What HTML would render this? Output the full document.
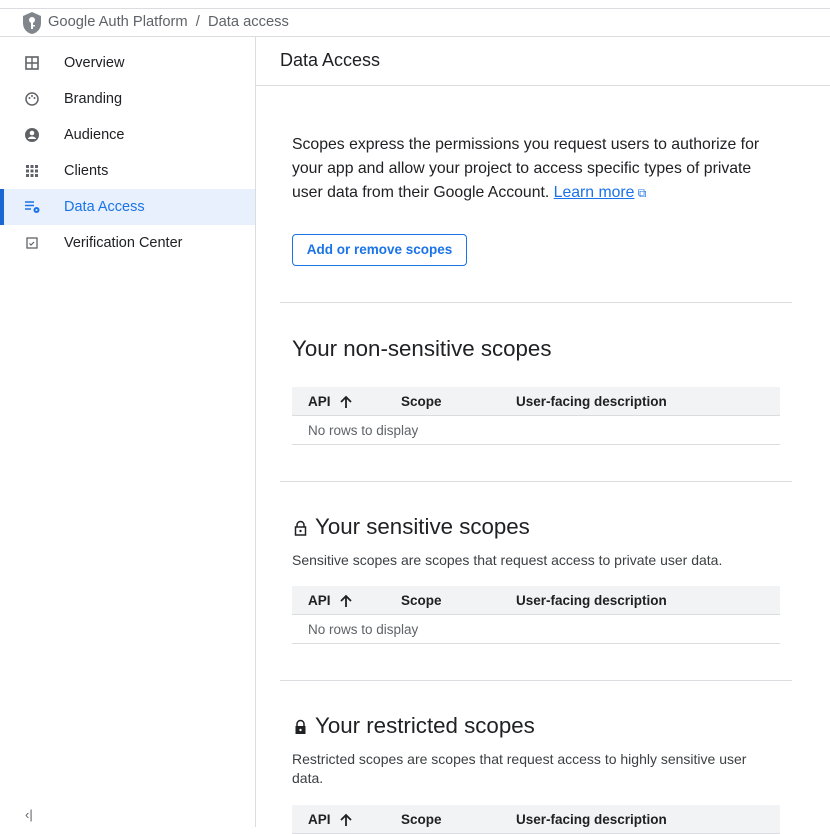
<!DOCTYPE html>
<html><head><meta charset="utf-8"><style>
*{box-sizing:border-box;margin:0;padding:0}
body{width:830px;height:827px;overflow:hidden;background:#fff;font-family:"Liberation Sans",sans-serif;color:#202124;position:relative}
.a{position:absolute;white-space:nowrap}
.hl{position:absolute;height:1px;background:#dadce0}
.nav{position:absolute;left:0;width:255px;height:36px;font-size:14.5px;color:#202124}
.nav span{position:absolute;left:64px;top:10px}
.nav svg{position:absolute;left:24px;top:10px}
.th{position:absolute;left:292px;width:488px;height:29px;background:#f1f3f4;border-bottom:1px solid #dadce0;font-size:13.5px;font-weight:bold;color:#202124}
.th span{position:absolute;top:7px}
.th svg{position:absolute;left:47px;top:8px}
.nr{position:absolute;left:292px;width:488px;height:29px;border-bottom:1px solid #dadce0;font-size:13.5px;color:#5f6368}
.nr span{position:absolute;left:16px;top:7px}
h2{position:absolute;font-weight:normal;font-size:22.3px;color:#202124;white-space:nowrap}
.p{position:absolute;left:292px;font-size:14px;color:#3c4043;line-height:19px}
</style></head><body>
<div class="hl" style="left:0;top:8px;width:830px"></div>
<svg class="a" style="left:23px;top:12px" width="18" height="22" viewBox="0 0 18 22"><path d="M9 0L18 4v7c0 6-4 10-9 11C4 21 0 17 0 11V4z" fill="#80868b"/><circle cx="9" cy="8" r="3" fill="#fff"/><rect x="8" y="10" width="2" height="7" fill="#fff"/><rect x="10" y="13" width="2" height="1.5" fill="#fff"/></svg>
<div class="a" style="left:48px;top:14px;font-size:14.7px;color:#5f6368">Google Auth Platform &nbsp;/&nbsp; Data access</div>
<div class="hl" style="left:0;top:36px;width:830px"></div>
<div style="position:absolute;left:255px;top:37px;width:1px;height:790px;background:#dadce0"></div>

<div class="nav" style="top:45px"><svg width="16" height="16" viewBox="0 0 16 16"><rect x="2" y="2" width="12" height="12" fill="none" stroke="#5f6368" stroke-width="1.6"/><path d="M8 2v12M2 8h12" stroke="#5f6368" stroke-width="1.4"/></svg><span>Overview</span></div>
<div class="nav" style="top:81px"><svg width="16" height="16" viewBox="0 0 16 16"><circle cx="8" cy="8" r="6" fill="none" stroke="#5f6368" stroke-width="1.5"/><circle cx="5.5" cy="7" r="1" fill="#5f6368"/><circle cx="8" cy="5" r="1" fill="#5f6368"/><circle cx="10.5" cy="7" r="1" fill="#5f6368"/></svg><span>Branding</span></div>
<div class="nav" style="top:117px"><svg width="16" height="16" viewBox="0 0 16 16"><circle cx="8" cy="8" r="7" fill="#5f6368"/><circle cx="8" cy="6" r="2.3" fill="#fff"/><path d="M3.8 12c1-2 2.5-2.5 4.2-2.5s3.2.5 4.2 2.5" fill="#fff"/></svg><span>Audience</span></div>
<div class="nav" style="top:153px"><svg width="16" height="16" viewBox="0 0 16 16" fill="#5f6368"><rect x="2" y="2" width="3" height="3"/><rect x="6.5" y="2" width="3" height="3"/><rect x="11" y="2" width="3" height="3"/><rect x="2" y="6.5" width="3" height="3"/><rect x="6.5" y="6.5" width="3" height="3"/><rect x="11" y="6.5" width="3" height="3"/><rect x="2" y="11" width="3" height="3"/><rect x="6.5" y="11" width="3" height="3"/><rect x="11" y="11" width="3" height="3"/></svg><span>Clients</span></div>
<div class="nav" style="top:189px;background:#e8f0fe;color:#1a73e8"><div style="position:absolute;left:0;top:0;width:4px;height:36px;background:#1967d2"></div><svg width="18" height="16" viewBox="0 0 18 16"><path d="M1 3h9M1 6.5h9M1 10h6" stroke="#1a73e8" stroke-width="1.5"/><circle cx="12.5" cy="11" r="3" fill="#1a73e8"/><circle cx="12.5" cy="11" r="1" fill="#e8f0fe"/></svg><span>Data Access</span></div>
<div class="nav" style="top:225px"><svg width="16" height="16" viewBox="0 0 16 16"><rect x="3" y="3" width="10" height="10" fill="none" stroke="#5f6368" stroke-width="1.3"/><path d="M5.5 8.5l1.5 1.5 3-3" stroke="#5f6368" stroke-width="1.2" fill="none"/></svg><span>Verification Center</span></div>
<div class="a" style="left:25px;top:807px;font-size:13px;color:#5f6368">‹|</div>

<div class="a" style="left:280px;top:50px;font-size:18px;color:#202124">Data Access</div>
<div class="hl" style="left:256px;top:85px;width:574px"></div>

<div class="a" style="left:292px;top:133px;font-size:15.8px;line-height:24px;color:#202124">Scopes express the permissions you request users to authorize for<br>your app and allow your project to access specific types of private<br>user data from their Google Account. <span style="color:#1a73e8;text-decoration:underline">Learn more</span><span style="color:#1a73e8;font-size:12px"> ⧉</span></div>
<div style="position:absolute;left:292px;top:234px;width:175px;height:32px;border:1px solid #1a73e8;border-radius:4px;font-size:13.5px;color:#1a73e8;text-align:center;line-height:30px;font-weight:bold">Add or remove scopes</div>
<div class="hl" style="left:280px;top:302px;width:512px"></div>

<h2 style="left:292px;top:336px">Your non-sensitive scopes</h2>
<div class="th" style="top:387px"><span style="left:16px">API</span><svg width="14" height="14" viewBox="0 0 14 14"><path d="M7 13V2M2 7l5-5 5 5" stroke="#202124" stroke-width="1.8" fill="none"/></svg><span style="left:109px">Scope</span><span style="left:224px">User-facing description</span></div>
<div class="nr" style="top:416px"><span>No rows to display</span></div>
<div class="hl" style="left:280px;top:481px;width:512px"></div>

<svg class="a" style="left:294px;top:520px" width="13" height="16" viewBox="0 0 13 16"><path d="M3 7V5a3.5 3.5 0 0 1 7 0v2" fill="none" stroke="#202124" stroke-width="1.5"/><rect x="1.5" y="7" width="10" height="8" fill="none" stroke="#202124" stroke-width="1.5"/><circle cx="6.5" cy="11" r="1.2" fill="#202124"/></svg>
<h2 style="left:315px;top:514px">Your sensitive scopes</h2>
<div class="p" style="top:551px">Sensitive scopes are scopes that request access to private user data.</div>
<div class="th" style="top:586px"><span style="left:16px">API</span><svg width="14" height="14" viewBox="0 0 14 14"><path d="M7 13V2M2 7l5-5 5 5" stroke="#202124" stroke-width="1.8" fill="none"/></svg><span style="left:109px">Scope</span><span style="left:224px">User-facing description</span></div>
<div class="nr" style="top:615px"><span>No rows to display</span></div>
<div class="hl" style="left:280px;top:680px;width:512px"></div>

<svg class="a" style="left:294px;top:719px" width="13" height="16" viewBox="0 0 13 16"><path d="M3 7V5a3.5 3.5 0 0 1 7 0v2" fill="none" stroke="#202124" stroke-width="1.5"/><rect x="1.5" y="7" width="10" height="8" fill="#202124"/><circle cx="6.5" cy="11" r="1.2" fill="#fff"/></svg>
<h2 style="left:315px;top:713px">Your restricted scopes</h2>
<div class="p" style="top:750px">Restricted scopes are scopes that request access to highly sensitive user<br>data.</div>
<div class="th" style="top:805px"><span style="left:16px">API</span><svg width="14" height="14" viewBox="0 0 14 14"><path d="M7 13V2M2 7l5-5 5 5" stroke="#202124" stroke-width="1.8" fill="none"/></svg><span style="left:109px">Scope</span><span style="left:224px">User-facing description</span></div>
</body></html>
